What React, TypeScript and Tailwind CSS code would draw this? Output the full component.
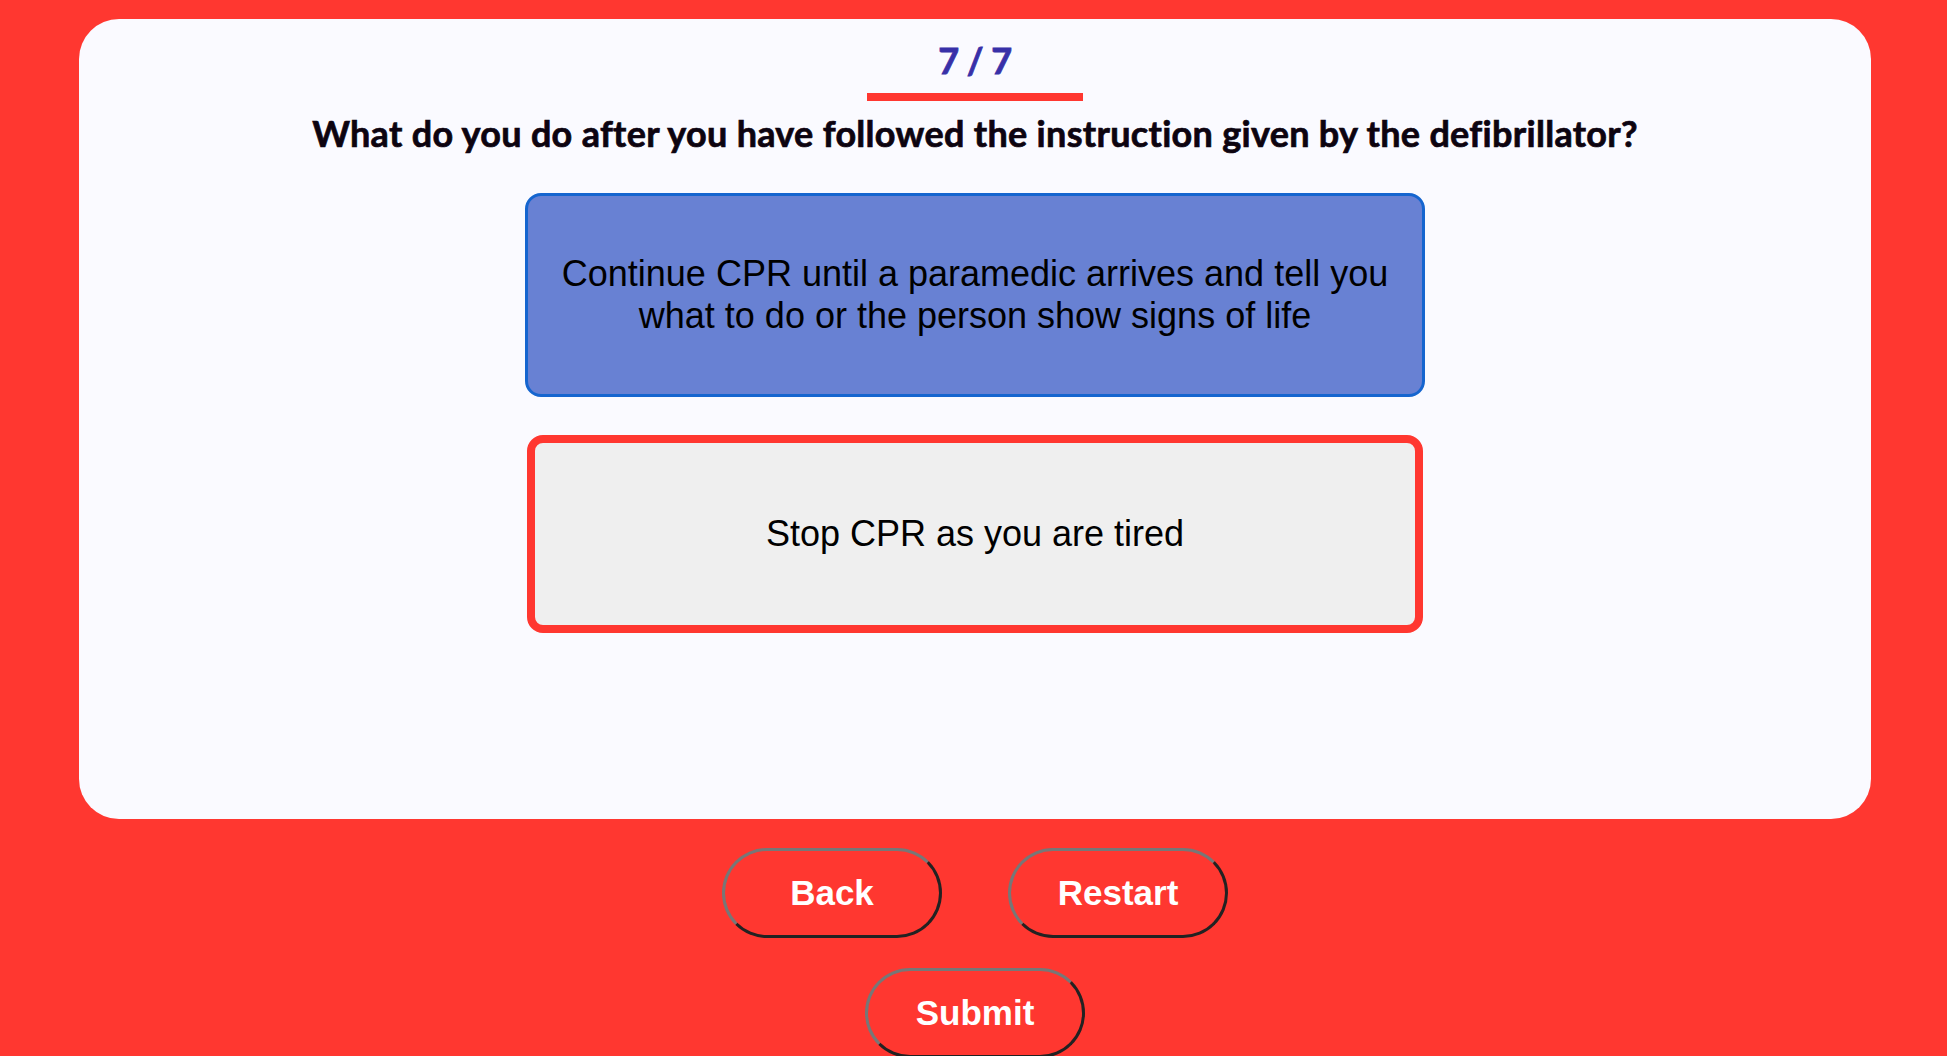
import React from "react";

export default function App() {
  const btn =
    "w-[220px] h-[90px] rounded-full bg-[#ff3730] border-[3px] border-t-[#777777] border-l-[#777777] border-r-[#222222] border-b-[#222222] text-white text-[35px] font-bold flex items-center justify-center";
  return (
    <div
      className="h-screen overflow-hidden bg-[#ff3730] pt-[19px]"
      style={{ fontFamily: '"Liberation Sans", Arial, sans-serif' }}
    >
      <div className="ml-[79px] w-[1792px] h-[800px] rounded-[40px] bg-[#fafaff] flex flex-col items-center pt-[18px]">
        <div
          className="text-[36px] leading-[46px] font-bold tracking-[-0.5px] text-[#3830a8] [-webkit-text-stroke:0.8px_#3830a8]"
          style={{ fontFamily: 'Lato, "Noto Sans", sans-serif' }}
        >
          7 / 7
        </div>
        <div className="mt-[10px] w-[216px] h-[8px] bg-[#ff3730]" />
        <div
          className="mt-[11px] text-[36px] leading-[42px] font-bold tracking-[0.3px] text-[#0d0410] [-webkit-text-stroke:0.7px_#0d0410]"
          style={{ fontFamily: 'Lato, "Noto Sans", sans-serif' }}
        >
          What do you do after you have followed the instruction given by the defibrillator?
        </div>
        <div className="mt-[39px] w-[900px] h-[204px] rounded-[16px] border-[3px] border-[#1565cf] bg-[#6881d3] flex items-center justify-center px-[20px] text-center text-[36px] leading-[42px] text-black">
          Continue CPR until a paramedic arrives and tell you what to do or the person show signs of life
        </div>
        <div className="mt-[38px] w-[896px] h-[198px] rounded-[16px] border-[8px] border-[#ff3730] bg-[#efefef] flex items-center justify-center text-center text-[36px] leading-[42px] text-black">
          Stop CPR as you are tired
        </div>
      </div>
      <div className="ml-[79px] w-[1792px] flex flex-col items-center">
        <div className="mt-[29px] flex gap-[66px]">
          <button className={btn}>Back</button>
          <button className={btn}>Restart</button>
        </div>
        <div className="mt-[30px]">
          <button className={btn}>Submit</button>
        </div>
      </div>
    </div>
  );
}
